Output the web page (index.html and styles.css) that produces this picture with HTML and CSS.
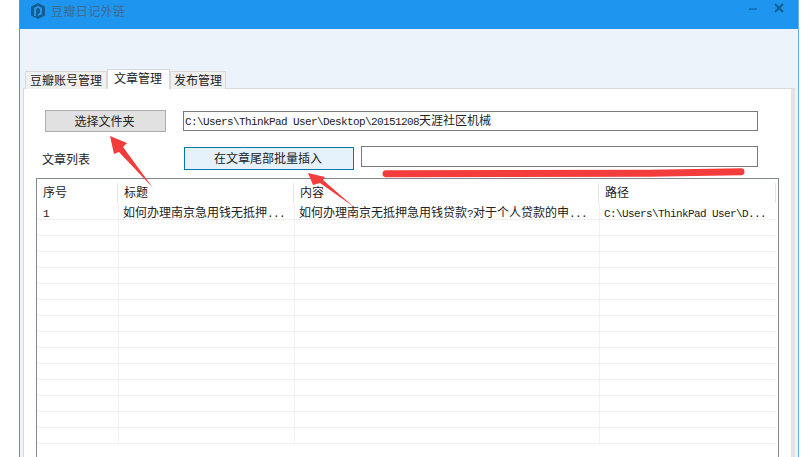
FILE: index.html
```html
<!DOCTYPE html>
<html lang="zh">
<head>
<meta charset="utf-8">
<title>豆瓣日记外链</title>
<link rel="stylesheet" href="styles.css">
</head>
<body>
<div class="window">
  <header class="titlebar">
    <svg class="logo" viewBox="0 0 16 18"><path d="M8 1 15 4.500V13.500L8 17 1 13.500V4.500Z" fill="#0f5f96"/><path d="M5 14V6.500L8 5l3 1.500V11.500L8 13" fill="none" stroke="#2f9bef" stroke-width="1.800"/></svg>
    <span class="title">豆瓣日记外链</span>
    <span class="controls">
      <svg class="ctl" viewBox="0 0 12 12"><path d="M2 7H10" stroke="#0f6fb0" stroke-width="1.600"/></svg>
      <svg class="ctl" viewBox="0 0 12 12"><path d="M2 2 10 10M10 2 2 10" stroke="#0f5f96" stroke-width="2.200"/></svg>
    </span>
  </header>
  <div class="client">
    <nav class="tabs">
      <span class="tab t1">豆瓣账号管理</span>
      <span class="tab active">文章管理</span>
      <span class="tab t3">发布管理</span>
    </nav>
    <main class="panel">
      <div class="row-a">
        <button class="btn">选择文件夹</button>
        <div class="field"><span class="m">C:\Users\ThinkPad User\Desktop\20151208</span>天涯社区机械</div>
      </div>
      <div class="row-b">
        <span class="label">文章列表</span>
        <button class="btn btn-focus">在文章尾部批量插入</button>
        <div class="field field-b"></div>
      </div>
      <section class="table">
        <div class="thead">
          <span class="th c1">序号</span><span class="th c2">标题</span><span class="th c3">内容</span><span class="th c4">路径</span>
        </div>
        <div class="tr first">
          <span class="td c1"><span class="m">1</span></span>
          <span class="td c2">如何办理南京急用钱无抵押<span class="m">...</span></span>
          <span class="td c3">如何办理南京无抵押急用钱贷款<span class="m">?</span>对于个人贷款的申<span class="m">...</span></span>
          <span class="td c4"><span class="m">C:\Users\ThinkPad User\D...</span></span>
        </div>
        <div class="tr"></div><div class="tr"></div><div class="tr"></div><div class="tr"></div>
        <div class="tr"></div><div class="tr"></div><div class="tr"></div><div class="tr"></div>
        <div class="tr"></div><div class="tr"></div><div class="tr"></div><div class="tr"></div>
        <div class="tr"></div><div class="tr"></div>
      </section>
    </main>
  </div>
</div>
<svg class="marks" viewBox="0 0 803 457">
  <path d="M110 136 127 143 123 147 153 188 119 152 114 154Z" fill="#f33c3c"/>
  <path d="M308 173 325 177 323 180 354 207 320 183 313 185Z" fill="#f33c3c"/>
  <path d="M386 173.800 650 173.300 741 171.800" fill="none" stroke="#f33c3c" stroke-width="7" stroke-linecap="round"/>
</svg>
</body>
</html>
```
FILE: styles.css
```css
* { box-sizing: border-box; }
html, body { margin: 0; height: 457px; overflow: hidden; background: #fff; }
body {
  position: relative;
  padding-left: 19px;
  font: 12px/16px "Noto Sans CJK SC", "Liberation Sans", sans-serif;
  color: #222;
}
.m { font-family: "Liberation Mono", monospace; font-size: 11px; letter-spacing: -0.600px; }
.window {
  width: 780px;
  height: 457px;
  border-left: 1px solid #3f9fe0;
  border-right: 1px solid #6aaee6;
  display: flex;
  flex-direction: column;
}
.titlebar {
  height: 29px;
  flex: none;
  background: #1e96f0;
  display: flex;
  align-items: flex-start;
  padding: 2px 8px 0 10px;
}
.logo { width: 16px; height: 18px; }
.title { margin-left: 5px; font-size: 12px; letter-spacing: 0.400px; line-height: 17px; color: #3d6c90; }
.controls { margin-left: auto; display: flex; gap: 14px; margin-right: 5px; }
.ctl { width: 12px; height: 12px; }
.client {
  flex: 1;
  background: #edf3fb;
  padding: 41px 3px 0 3px;
  display: flex;
  flex-direction: column;
}
.tabs { display: flex; align-items: flex-end; height: 19px; padding-left: 2px; margin-bottom: -1px; position: relative; }
.tab {
  height: 18px;
  border: 1px solid #d9d9d9;
  border-bottom: 0;
  background: #f0f0f0;
  padding: 0 0 0 4px;
  color: #222;
  white-space: nowrap;
}
.t1 { width: 82px; }
.t3 { width: 56px; padding-left: 3px; }
.tab.active { height: 20px; width: 63px; background: #fff; padding-left: 6px; position: relative; z-index: 1; }
.panel {
  flex: 1;
  background: #fff;
  border: 1px solid #d9d9d9;
  border-right: 4px solid #e3e3e3;
  padding: 21px 13px 0 12px;
}
.row-a { display: flex; align-items: center; gap: 17px; padding-left: 9px; height: 22px; }
.btn {
  font: inherit;
  color: #222;
  width: 121px;
  height: 22px;
  padding: 0 2px 0 0;
  border: 1px solid #adadad;
  background: #e1e1e1;
}
.field {
  flex: 1;
  height: 20px;
  margin-right: 20px;
  border: 1px solid #7a7a7a;
  background: #fff;
  padding: 0 1px;
  white-space: nowrap;
}
.row-b { display: flex; align-items: center; height: 24px; margin-top: 14px; margin-bottom: 8px; padding-left: 6px; }
.label { width: 142px; position: relative; top: 1px; }
.btn-focus { width: 170px; height: 23px; border-color: #0078a8; background: #e5f1fb; }
.field-b { margin-left: 7px; height: 21px; position: relative; top: -2px; }
.table {
  height: 300px;
  border: 1px solid #828790;
  border-bottom: 0;
  width: 743px;
  overflow: hidden;
}
.thead { display: flex; height: 24px; padding-top: 4px; }
.th, .td { display: block; flex: none; padding-left: 6px; white-space: nowrap; }
.th { font-size: 12px; line-height: 18px; border-right: 1px solid #e5e5e5; height: 20px; }
.th.c4 { width: 177px; }
.c1 { width: 81px; }
.c2 { width: 176px; }
.c3 { width: 305px; }
.c4 { width: 178px; }
.tr { display: flex; height: 16px; border-bottom: 1px solid #efefef; margin-right: 3px; background: linear-gradient(#f1f1f1, #f1f1f1) 81px 0 / 1px 100% no-repeat, linear-gradient(#f1f1f1, #f1f1f1) 257px 0 / 1px 100% no-repeat, linear-gradient(#f1f1f1, #f1f1f1) 562px 0 / 1px 100% no-repeat; }
.first { height: 17px; line-height: 17px; }
.first .td { padding-left: 5px; }
.first .c1 { padding-left: 6px; }
.marks { position: absolute; left: 0; top: 0; width: 803px; height: 457px; pointer-events: none; }
```
